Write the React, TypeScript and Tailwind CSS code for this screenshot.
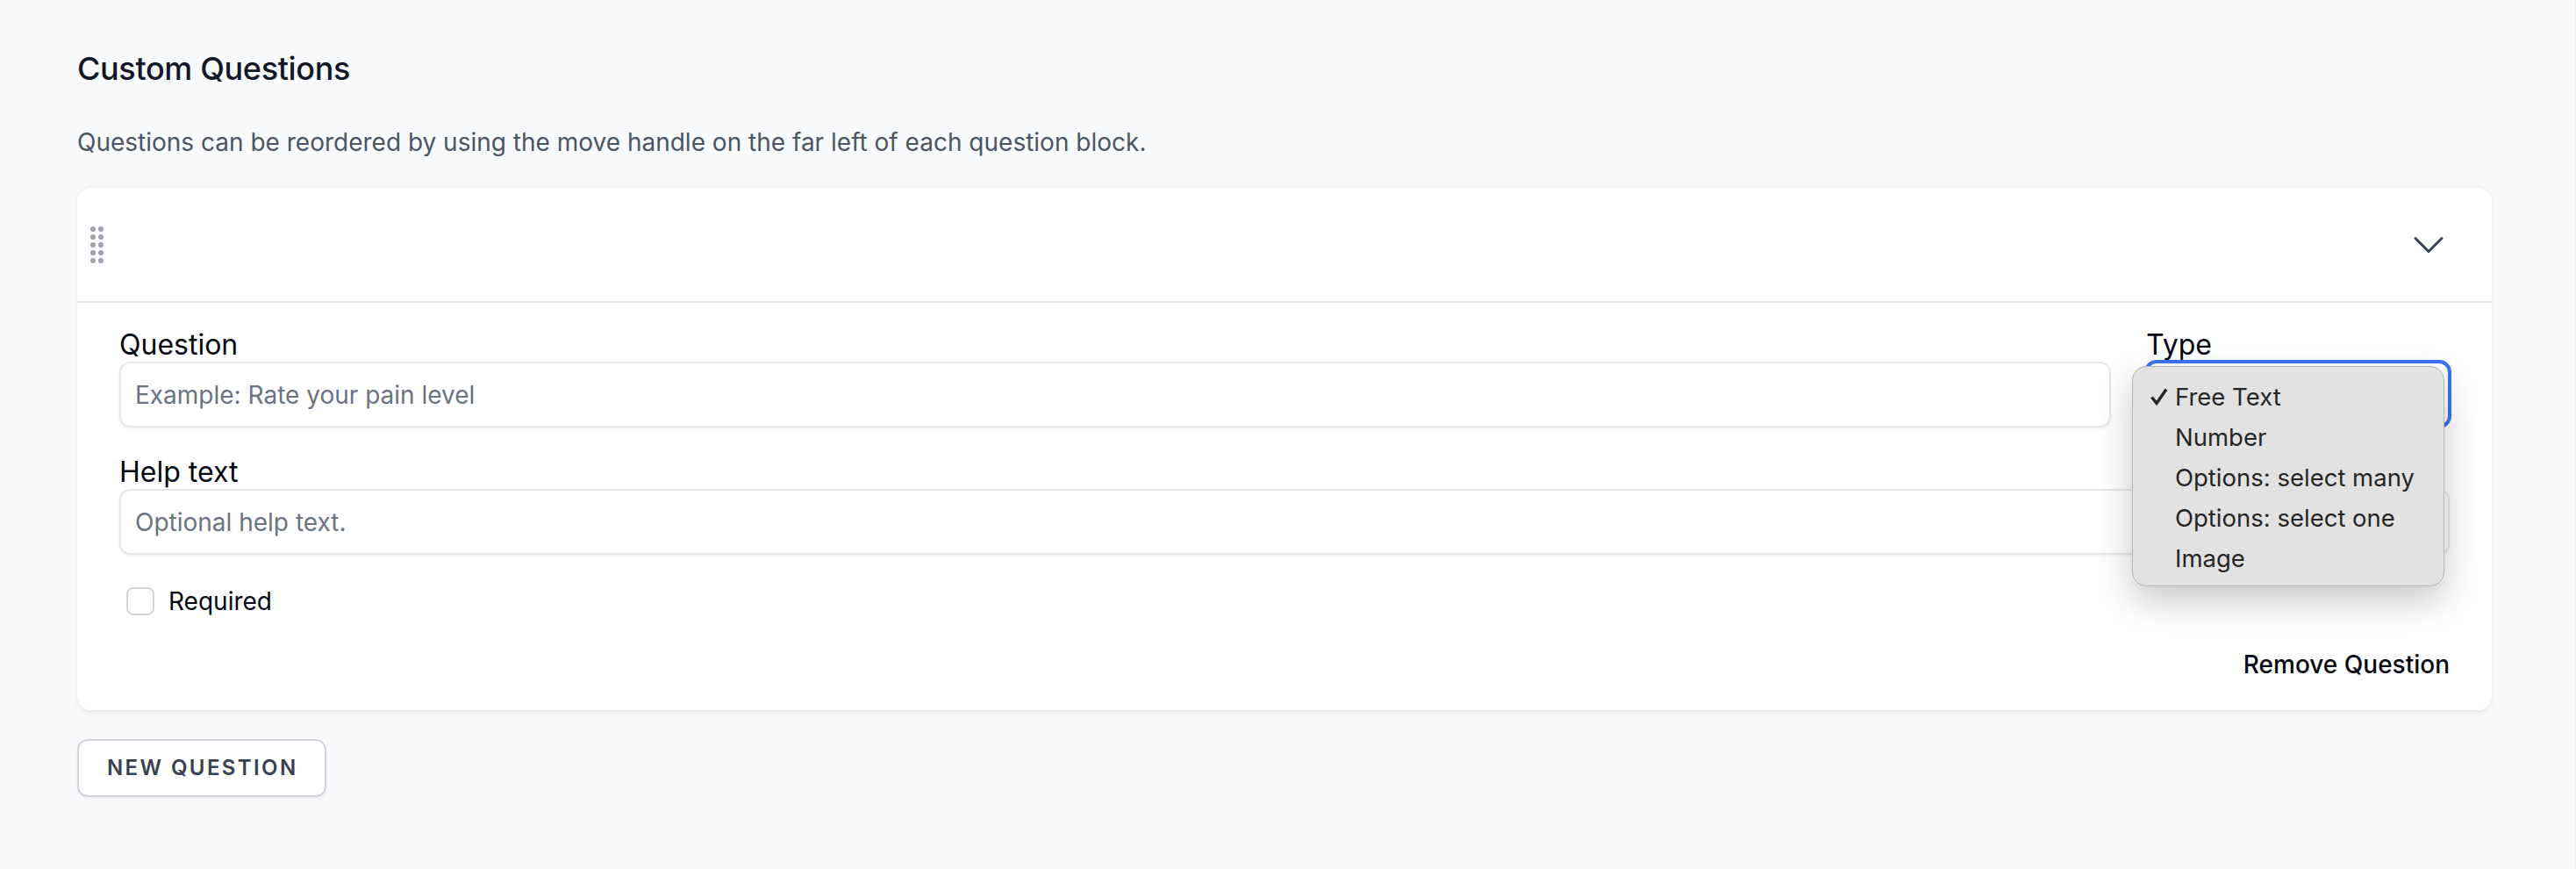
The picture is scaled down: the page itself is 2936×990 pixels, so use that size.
import React from 'react';

const TYPE_OPTIONS = ['Free Text', 'Number', 'Options: select many', 'Options: select one', 'Image'];

function DragHandle() {
  const rows = [0, 1, 2, 3, 4];
  return (
    <svg width="15" height="42" viewBox="0 0 15 42" className="fill-[#9ca3af]">
      {rows.map((r) => (
        <g key={r}>
          <circle cx="3" cy={3 + r * 9} r="3" />
          <circle cx="12" cy={3 + r * 9} r="3" />
        </g>
      ))}
    </svg>
  );
}

function TextField({ label, placeholder }: { label: string; placeholder: string }) {
  return (
    <div className="flex flex-1 flex-col">
      <label className="mb-[3px] text-[32px] leading-[32px] text-[#030712]">{label}</label>
      <input
        placeholder={placeholder}
        className="h-[75px] w-full rounded-[12px] border-2 border-[#e5e7eb] bg-white px-[16px] text-[28px] shadow-[0_2px_3px_rgba(0,0,0,0.05)] outline-none placeholder:text-[#6b7280]"
      />
    </div>
  );
}

export default function App() {
  return (
    <div className="min-h-[990px] border-r border-[#eeeff1] bg-[#f9fafb] py-[58px] pl-[88px] pr-[95px] font-['Inter',sans-serif]">
      <h2 className="text-[36px] font-medium leading-[40px] tracking-[-0.35px] text-[#111827]">Custom Questions</h2>
      <p className="mt-[44px] text-[28px] leading-[40px] text-[#4b5563]">
        Questions can be reordered by using the move handle on the far left of each question block.
      </p>

      <div className="mt-[32px] rounded-[16px] bg-white shadow-[0_2px_6px_rgba(0,0,0,0.1)]">
        <div className="flex h-[131px] items-center justify-between border-b-2 border-[#e5e7eb] pl-[15px] pr-[48px]">
          <DragHandle />
          <svg width="48" height="48" viewBox="0 0 24 24" fill="none" stroke="#374151" strokeWidth="1.5" strokeLinecap="round" strokeLinejoin="round">
            <path d="m19.5 8.25-7.5 7.5-7.5-7.5" />
          </svg>
        </div>

        <div className="px-[48px] pt-[32px]">
          <div className="flex gap-[40px]">
            <TextField label="Question" placeholder="Example: Rate your pain level" />
            <div className="relative flex w-[346px] flex-col">
              <label className="mb-[3px] text-[32px] leading-[32px] text-[#030712]">Type</label>
              <div className="-mx-[2px] -mt-[2px] h-[78px] rounded-[14px] border-4 border-[#3b74ed] bg-white" />
              <div className="absolute left-[-16px] top-[40px] h-[251px] w-[356px] rounded-[16px] border border-[#b5b5b5] bg-[#e2e2e2] py-[11px] text-[27.5px] leading-[46px] text-[#262626] shadow-[0_16px_40px_rgba(0,0,0,0.22)]">
                {TYPE_OPTIONS.map((o, i) => (
                  <div key={o} className="relative pl-[48px]">
                    {i === 0 && (
                      <svg width="20" height="20" viewBox="0 0 20 20" fill="none" stroke="#262626" strokeWidth="3.4" className="absolute left-[20px] top-[13px]">
                        <path d="M1.5 10.5 7 17.5 18 1.5" />
                      </svg>
                    )}
                    {o}
                  </div>
                ))}
              </div>
            </div>
          </div>

          <div className="mt-[34px] flex">
            <TextField label="Help text" placeholder="Optional help text." />
          </div>

          <label className="mt-[33px] flex items-center gap-[16px] pl-[8px] text-[28px] leading-[40px] text-[#030712]">
            <span className="h-[32px] w-[32px] rounded-[8px] border-2 border-[#d1d5db] bg-white" />
            Required
          </label>

          <div className="flex justify-end pb-[32px] pt-[32px]">
            <button className="text-[28px] font-medium leading-[40px] text-[#030712]">Remove Question</button>
          </div>
        </div>
      </div>

      <button className="mt-[33px] h-[66px] rounded-[12px] border-2 border-[#d1d5db] bg-white pl-[32px] pr-[30px] text-[24px] font-semibold tracking-[0.1em] text-[#374151] shadow-[0_2px_3px_rgba(0,0,0,0.05)]">
        NEW QUESTION
      </button>
    </div>
  );
}
